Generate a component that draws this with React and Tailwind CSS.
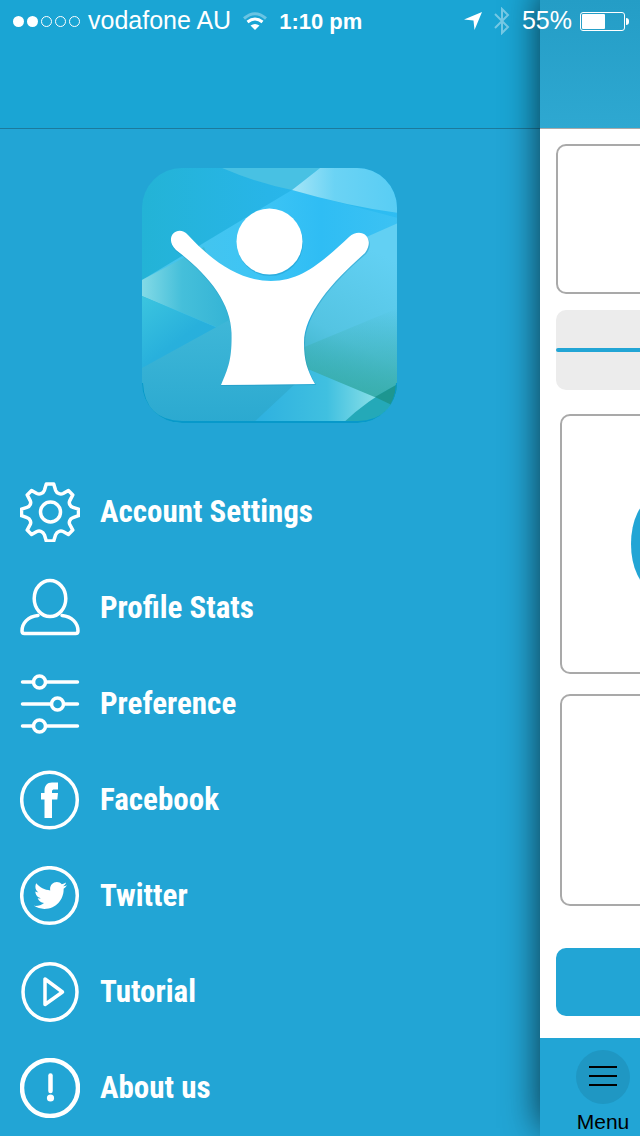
import { FaTwitter } from "react-icons/fa";

const Gear = () => (
  <>
    <path d="M26.3 2h7.4l1.9 6.3q1 2.600 3.500 3.400 2 .8 4-.2l5.300-3 4.400 4.400-3 5.700q-1 2 0 4 .8 2 3.200 2.800l5.500 1.700v6.600l-5.500 2q-2.400.8-3.200 2.800-1 2 0 4l3 5.600-4.400 4.400-5.300-3q-2-1-4-.2-2.500.9-3.500 3.500l-1.900 6.300h-7.400l-1.900-6.300q-1-2.600-3.500-3.500-2-.8-4 .2l-5.300 3-4.400-4.400 3-5.600q1-2 0-4-.8-2-3.200-2.800l-5.500-2v-6.600l5.500-1.700q2.400-.8 3.200-2.800 1-2 0-4l-3-5.700 4.400-4.400 5.300 3q2 1 4 .2 2.500-.8 3.500-3.400z" />
    <circle cx="30.500" cy="30" r="10" />
  </>
);

const Person = () => (
  <>
    <ellipse cx="30" cy="20.500" rx="15.800" ry="18" />
    <path d="M18 37.500C8 38.500 2 45 2 53q0 2.500 2.500 2.500h51q2.500 0 2.500-2.500c0-8-6-14.500-16-15.500" />
  </>
);

const Sliders = () => (
  <>
    <path d="M2.500 8h11M26 8h31.500M2.500 30h29M44 30h13.500M2.500 52h11M26 52h31.500" />
    <circle cx="19.500" cy="8" r="6" />
    <circle cx="37.500" cy="30" r="6" />
    <circle cx="19.500" cy="52" r="6" />
  </>
);

const Facebook = () => (
  <>
    <circle cx="29.500" cy="30" r="27.800" />
    <path
      fill="white"
      stroke="none"
      d="M24.500 48V29.500H21v-6.500h3.500V21c0-5.500 2.500-8.500 7.500-8.500h6v7h-3.300c-2 0-2.700.5-2.700 2V23H38l-.7 6.500H32V48z"
    />
  </>
);

const Twitter = () => (
  <>
    <circle cx="29.500" cy="29.500" r="27.800" />
    <FaTwitter x="14" y="13" size="33" fill="white" stroke="none" />
  </>
);

const Play = () => (
  <>
    <ellipse cx="30" cy="30" rx="27" ry="28.200" />
    <path d="M25 17v25.500L42.500 30z" />
  </>
);

const Info = () => (
  <>
    <circle cx="30" cy="30" r="28" strokeWidth="4.500" />
    <path d="M30.500 17.500v15.500" strokeWidth="4.500" />
    <circle cx="30.500" cy="40" r="3.600" fill="white" stroke="none" />
  </>
);

const menuItems = [
  { label: "Account Settings", icon: Gear },
  { label: "Profile Stats", icon: Person },
  { label: "Preference", icon: Sliders },
  { label: "Facebook", icon: Facebook },
  { label: "Twitter", icon: Twitter },
  { label: "Tutorial", icon: Play },
  { label: "About us", icon: Info },
];

function Logo() {
  return (
    <svg viewBox="0 0 256 256" className="w-64 h-64" role="img" aria-label="App logo">
      <defs>
        <clipPath id="tile">
          <rect width="255" height="255" rx="40" />
        </clipPath>
        <linearGradient id="base" x1="0" y1="0" x2="1" y2="0">
          <stop offset="0" stopColor="#23b3d6" />
          <stop offset=".5" stopColor="#28b5e8" />
          <stop offset="1" stopColor="#2ebdf3" />
        </linearGradient>
        <linearGradient id="band" x1="0" y1="0" x2="1" y2="0">
          <stop offset="0" stopColor="#48c4e8" />
          <stop offset=".45" stopColor="#3ec5f5" />
          <stop offset=".7" stopColor="#2fbdf4" />
          <stop offset="1" stopColor="#3cc2f3" />
        </linearGradient>
        <linearGradient id="left" x1="0" y1="0" x2="1" y2="0">
          <stop offset="0" stopColor="#83dae6" />
          <stop offset=".4" stopColor="#45bfda" />
          <stop offset="1" stopColor="#30b1d4" />
        </linearGradient>
        <linearGradient id="right" x1=".3" y1="0" x2="0" y2="1">
          <stop offset="0" stopColor="#62d0f3" />
          <stop offset=".5" stopColor="#54c4e2" />
          <stop offset="1" stopColor="#25a2ab" />
        </linearGradient>
        <linearGradient id="corner" x1="0" y1="0" x2="0" y2="1">
          <stop offset="0" stopColor="#39aeac" stopOpacity="0" />
          <stop offset="1" stopColor="#38ada6" />
        </linearGradient>
        <linearGradient id="beam" x1="0" y1="0" x2="1" y2="0">
          <stop offset="0" stopColor="#a5e5f7" />
          <stop offset=".4" stopColor="#6bd3f4" />
          <stop offset="1" stopColor="#58cdf4" />
        </linearGradient>
        <linearGradient id="bottom" x1="0" y1="0" x2="0" y2="1">
          <stop offset="0" stopColor="#40b8d8" />
          <stop offset="1" stopColor="#2ba9d0" />
        </linearGradient>
        <linearGradient id="ray" x1="0" y1="0" x2="1" y2="0">
          <stop offset="0" stopColor="#2db0e0" />
          <stop offset=".6" stopColor="#40c0e0" />
          <stop offset="1" stopColor="#8be0e7" />
        </linearGradient>
        <linearGradient id="leftGlow" x1="0" y1="0" x2="1" y2="1">
          <stop offset="0" stopColor="#3cc5df" />
          <stop offset=".5" stopColor="#28b0dc" />
          <stop offset="1" stopColor="#28addf" />
        </linearGradient>
      </defs>
      <g clipPath="url(#tile)">
        <rect width="256" height="255" fill="url(#base)" />
        <path d="M0 112 150 22 256 50V160L90 168 0 128z" fill="url(#band)" />
        <path d="M0 112 62 79 100 170 0 128z" fill="url(#left)" />
        <path d="M0 128 95 168V175L0 200z" fill="url(#leftGlow)" />
        <path d="M80 0Q115 15 150 22L178 0z" fill="#48c1e3" />
        <path d="M178 0 150 22Q205 38 256 45V0z" fill="url(#beam)" />
        <path d="M256 55 195 82 150 200 256 246z" fill="url(#right)" />
        <path d="M256 140 160 180V200L256 246z" fill="url(#corner)" />
        <path d="M0 200 100 145 168 202 232 230 200 256H0z" fill="url(#bottom)" />
        <path d="M168 202 235 230 201 256H110z" fill="url(#ray)" />
        <path d="M256 216Q225 232 200 256H256z" fill="#24a9b8" />
        <path d="M256 216 233 229 256 240z" fill="#1d9690" />
        <path d="M0 215Q2 253 40 254H216Q253 253 255 215" fill="none" stroke="#0799ca" strokeWidth="2" />
      </g>
      <g fill="#168fc0" opacity=".4" transform="translate(0 1)">
        <circle cx="128" cy="74" r="33" />
        <path d="M45 67C69 92 97 113 129 113S183 91 208 69C220 58 235 71 224 85C190 114 163 146 163 175C163 192 166 202 174 216L79 217C87 199 90 190 89.500 165C89 135 66 106 34 82C21 69 36 56 45 67z" />
      </g>
      <g fill="white">
        <circle cx="127.500" cy="73.500" r="33" />
        <path d="M46 67C69 92 97 113 129 113S183 91 207 69C219 58 234 70 223 85C190 114 162 146 162 175C162 192 165 202 173 216L79 217C87 199 90 190 89.500 165C89 135 66 106 34 82C21 69 36 56 46 67z" />
      </g>
    </svg>
  );
}

function StatusBar() {
  return (
    <div className="absolute inset-x-0 top-0 z-20 h-[42px] pl-[13px] pr-[11px] flex items-center justify-between text-white text-[25px]">
      <div className="flex items-center">
        <div className="flex gap-[3px] mr-2">
          <span className="size-[11px] rounded-full bg-white" />
          <span className="size-[11px] rounded-full bg-white" />
          <span className="size-[11px] rounded-full border border-white" />
          <span className="size-[11px] rounded-full border border-white" />
          <span className="size-[11px] rounded-full border border-white" />
        </div>
        <span>vodafone AU</span>
        <svg viewBox="0 0 24 18" className="w-6 h-[18px] ml-3 mr-3" fill="none" stroke="white" strokeWidth="3">
          <path d="M1 6.500Q12-3 23 6.500" opacity=".35" />
          <path d="M4.500 10Q12 4 19.500 10" />
          <path d="M12 18 7.500 13.500Q12 10.500 16.500 13.500z" fill="white" stroke="none" />
        </svg>
        <span className="text-[22px] font-bold">1:10 pm</span>
      </div>
      <div className="flex items-center">
        <svg viewBox="0 0 18 18" className="size-[18px] mr-3" fill="white">
          <path d="M18 0 10.500 18 9.500 8.500 0 7.500z" />
        </svg>
        <svg viewBox="0 0 16 28" className="w-4 h-7 mr-3" fill="none" stroke="white" strokeWidth="2" opacity=".4">
          <path d="M1 7 14 20 8 26V2L14 8 1 21" />
        </svg>
        <span className="mr-2">55%</span>
        <div className="w-[45px] h-[19px] p-px rounded-[3px] border border-white">
          <div className="w-[23px] h-full bg-white rounded-[1px]" />
        </div>
        <div className="w-[3px] h-[7px] ml-px rounded-r-full bg-white" />
      </div>
    </div>
  );
}

function Drawer() {
  return (
    <aside className="flex-1 flex flex-col bg-[#22a5d5]">
      <div className="h-32 bg-[#1aa5d4]" />
      <div className="flex justify-center pt-[39px] pb-10 border-t border-[#1c7a9c]">
        <Logo />
      </div>
      <nav className="flex flex-col">
        {menuItems.map(({ label, icon: Icon }) => (
          <a key={label} href="#" className="h-24 px-5 flex items-center gap-5">
            <svg
              viewBox="0 0 60 60"
              className="size-[60px]"
              fill="none"
              stroke="white"
              strokeWidth="3.500"
              strokeLinecap="round"
              strokeLinejoin="round"
            >
              <Icon />
            </svg>
            <span className="text-[31px] leading-10 font-bold text-white font-['Roboto_Condensed','Roboto',sans-serif]">
              {label}
            </span>
          </a>
        ))}
      </nav>
    </aside>
  );
}

// The main screen stays full width, only its left edge shows beside the drawer
function MainScreen() {
  return (
    <div className="relative z-10 w-[100px] shrink-0 flex shadow-[0_-8px_36px_rgba(0,0,0,0.7)]">
      <main className="w-full flex flex-col overflow-hidden bg-white">
        <div className="w-screen h-32 bg-linear-to-b from-[#249dc6] to-[#2ea8d1]" />
        <div className="w-screen grow px-4 pt-[15px] border-t border-[#a9a9a9]">
          <div className="h-[150px] rounded-[10px] border-2 border-[#a9a9a9]" />
          <div className="h-20 mt-4 rounded-[10px] bg-[#ececec] flex items-center">
            <div className="w-full h-1 rounded-full bg-[#22a5d5]" />
          </div>
          <div className="h-[260px] mt-6 mx-1 pl-[69px] rounded-[10px] border-2 border-[#a9a9a9] flex items-center">
            <div className="w-11 h-[88px] rounded-[50%] bg-[#22a5d5]" />
          </div>
          <div className="h-[212px] mt-5 mx-1 rounded-[10px] border-2 border-[#a9a9a9]" />
          <button aria-label="Continue" className="block w-full h-[68px] mt-[42px] mb-[22px] rounded-[10px] bg-[#22a5d5]" />
        </div>
        <div className="w-screen h-[98px] pt-3 bg-[#22a5d5]">
          <button className="w-[126px] flex flex-col items-center text-[21px] leading-7 text-black">
            <span className="size-[54px] rounded-full bg-[#1f97c3] flex items-center justify-center">
              <svg viewBox="0 0 28 22" className="w-7 h-[22px]" stroke="black" strokeWidth="2">
                <path d="M0 1h28M0 10h28M0 19h28" />
              </svg>
            </span>
            <span className="mt-1">Menu</span>
          </button>
        </div>
      </main>
    </div>
  );
}

export default function App() {
  return (
    <div className="relative min-h-screen flex overflow-hidden font-['Liberation_Sans',Arial,sans-serif]">
      <StatusBar />
      <Drawer />
      <MainScreen />
    </div>
  );
}
